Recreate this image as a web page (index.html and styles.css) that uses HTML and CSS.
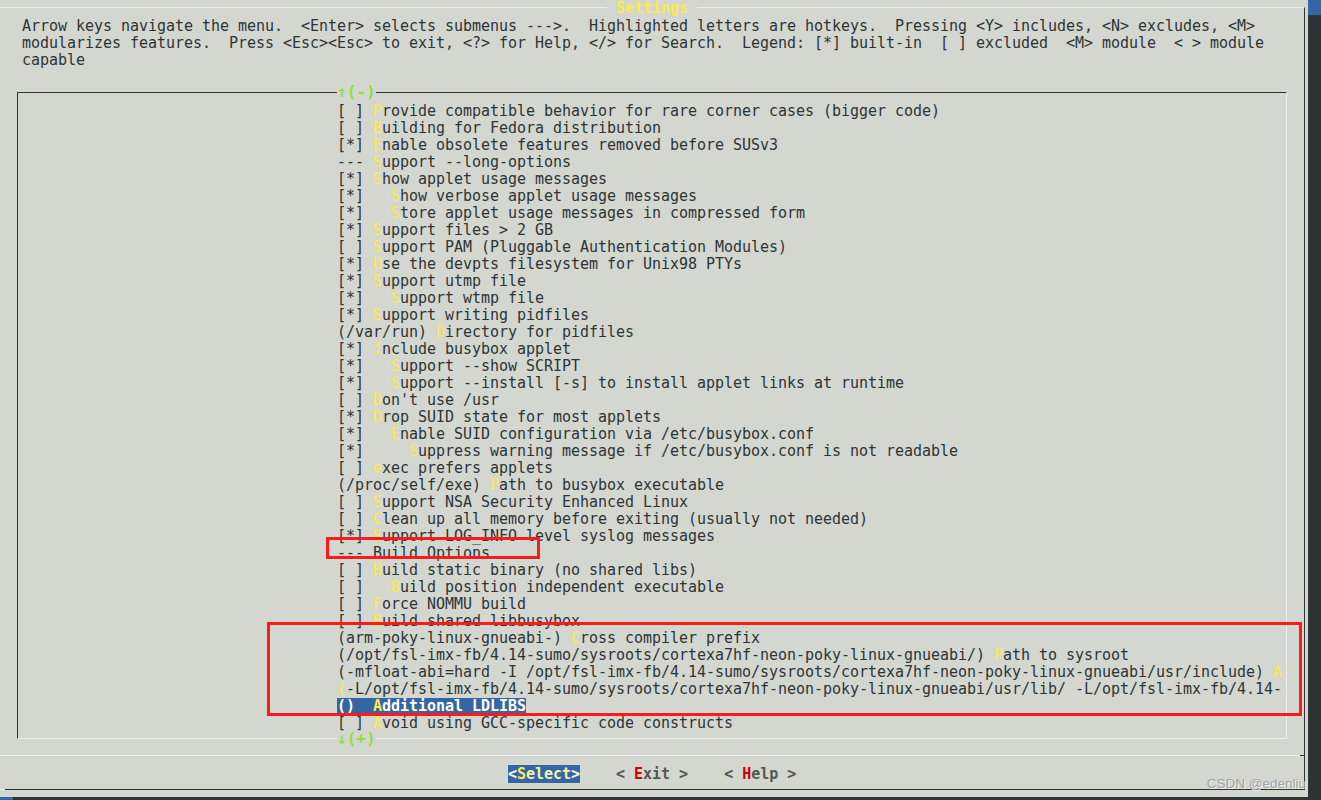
FILE: index.html
```html
<!DOCTYPE html>
<html>
<head>
<meta charset="utf-8">
<link rel="stylesheet" href="styles.css">
</head>
<body>
<div class="screen">
  <div class="term">
    <div class="dialog">
      <div class="title"> Settings </div>
      <div class="help">
        <div class="line">Arrow keys navigate the menu.  &lt;Enter&gt; selects submenus ---&gt;.  Highlighted letters are hotkeys.  Pressing &lt;Y&gt; includes, &lt;N&gt; excludes, &lt;M&gt;</div>
        <div class="line">modularizes features.  Press &lt;Esc&gt;&lt;Esc&gt; to exit, &lt;?&gt; for Help, &lt;/&gt; for Search.  Legend: [*] built-in  [ ] excluded  &lt;M&gt; module  &lt; &gt; module</div>
        <div class="line">capable</div>
      </div>
      <div class="menubox">
        <div class="more up">↑(-)</div>
        <div class="r">[ ] <span class="k">P</span>rovide compatible behavior for rare corner cases (bigger code)</div>
        <div class="r">[ ] <span class="k">B</span>uilding for Fedora distribution</div>
        <div class="r">[*] <span class="k">E</span>nable obsolete features removed before SUSv3</div>
        <div class="r">--- <span class="k">S</span>upport --long-options</div>
        <div class="r">[*] <span class="k">S</span>how applet usage messages</div>
        <div class="r">[*]   <span class="k">S</span>how verbose applet usage messages</div>
        <div class="r">[*]   <span class="k">S</span>tore applet usage messages in compressed form</div>
        <div class="r">[*] <span class="k">S</span>upport files &gt; 2 GB</div>
        <div class="r">[ ] <span class="k">S</span>upport PAM (Pluggable Authentication Modules)</div>
        <div class="r">[*] <span class="k">U</span>se the devpts filesystem for Unix98 PTYs</div>
        <div class="r">[*] <span class="k">S</span>upport utmp file</div>
        <div class="r">[*]   <span class="k">S</span>upport wtmp file</div>
        <div class="r">[*] <span class="k">S</span>upport writing pidfiles</div>
        <div class="r">(/var/run) <span class="k">D</span>irectory for pidfiles</div>
        <div class="r">[*] <span class="k">I</span>nclude busybox applet</div>
        <div class="r">[*]   <span class="k">S</span>upport --show SCRIPT</div>
        <div class="r">[*]   <span class="k">S</span>upport --install [-s] to install applet links at runtime</div>
        <div class="r">[ ] <span class="k">D</span>on't use /usr</div>
        <div class="r">[*] <span class="k">D</span>rop SUID state for most applets</div>
        <div class="r">[*]   <span class="k">E</span>nable SUID configuration via /etc/busybox.conf</div>
        <div class="r">[*]     <span class="k">S</span>uppress warning message if /etc/busybox.conf is not readable</div>
        <div class="r">[ ] <span class="k">e</span>xec prefers applets</div>
        <div class="r">(/proc/self/exe) <span class="k">P</span>ath to busybox executable</div>
        <div class="r">[ ] <span class="k">S</span>upport NSA Security Enhanced Linux</div>
        <div class="r">[ ] <span class="k">C</span>lean up all memory before exiting (usually not needed)</div>
        <div class="r">[*] <span class="k">S</span>upport LOG_INFO level syslog messages</div>
        <div class="r">--- Build Options</div>
        <div class="r">[ ] <span class="k">B</span>uild static binary (no shared libs)</div>
        <div class="r">[ ]   <span class="k">B</span>uild position independent executable</div>
        <div class="r">[ ] <span class="k">F</span>orce NOMMU build</div>
        <div class="r">[ ] <span class="k">B</span>uild shared libbusybox</div>
        <div class="r">(arm-poky-linux-gnueabi-) <span class="k">C</span>ross compiler prefix</div>
        <div class="r">(/opt/fsl-imx-fb/4.14-sumo/sysroots/cortexa7hf-neon-poky-linux-gnueabi/) <span class="k">P</span>ath to sysroot</div>
        <div class="r">(-mfloat-abi=hard -I /opt/fsl-imx-fb/4.14-sumo/sysroots/cortexa7hf-neon-poky-linux-gnueabi/usr/include) <span class="k">A</span></div>
        <div class="r"><span class="k">(</span>-L/opt/fsl-imx-fb/4.14-sumo/sysroots/cortexa7hf-neon-poky-linux-gnueabi/usr/lib/ -L/opt/fsl-imx-fb/4.14-</div>
        <div class="r"><span class="sel">()  <span class="k">A</span>dditional LDLIBS</span></div>
        <div class="r">[ ] <span class="k">A</span>void using GCC-specific code constructs</div>
        <div class="more down">↓(+)</div>
      </div>
      <div class="sep"></div>
      <div class="buttons"><span class="btn active">&lt;<span class="bk">S</span><span class="bl">elect</span>&gt;</span>    <span class="btn">&lt; <span class="hk">E</span>xit &gt;</span>    <span class="btn">&lt; <span class="hk">H</span>elp &gt;</span></div>
    </div>
    <div class="shadow"></div>
  </div>
  <div class="side"></div>
  <div class="mark mark1"></div>
  <div class="mark mark2"></div>
  <div class="watermark">CSDN @edenliu</div>
</div>
</body>
</html>
```

FILE: styles.css
```css
html, body {
  margin: 0;
  padding: 0;
}
body {
  width: 1321px;
  height: 800px;
  overflow: hidden;
  background: #d3d7cf;
  font-family: "DejaVu Sans Mono", monospace;
  font-size: 15px;
  line-height: 17px;
  letter-spacing: -0.03px;
  color: #2e3436;
}
.screen {
  position: relative;
  display: flex;
  width: 1321px;
  height: 800px;
}
.term {
  width: 1308px;
  display: flex;
  flex-direction: column;
  overflow: hidden;
}
.dialog {
  position: relative;
  margin: 7px 0 0 -1px;
  width: 1306px;
  height: 783px;
  box-sizing: border-box;
  border-top: 1px solid #eeeeec;
  border-left: 1px solid #eeeeec;
  border-right: 1px solid #2e3436;
  border-bottom: 1px solid #2e3436;
}
.dialog::after {
  content: "";
  position: absolute;
  left: -1px;
  bottom: -1px;
  width: 6px;
  height: 1px;
  background: #eeeeec;
}
.title {
  position: absolute;
  top: -8px;
  left: 607px;
  white-space: pre;
  background: #d3d7cf;
  color: #fce94f;
  font-weight: bold;
}
.help {
  padding: 10px 0 0 22px;
}
.line {
  white-space: pre;
  height: 17px;
}
.menubox {
  position: relative;
  margin: 23px 0 0 17px;
  width: 1270px;
  height: 647px;
  box-sizing: border-box;
  border-top: 1px solid #2e3436;
  border-left: 1px solid #2e3436;
  border-right: 1px solid #eeeeec;
  border-bottom: 1px solid #eeeeec;
  padding: 10px 0 0 319px;
}
.r {
  white-space: pre;
  height: 17px;
  overflow: hidden;
  width: 946px;
}
.k {
  color: #fce94f;
}
.sel {
  background: #3465a4;
  color: #ffffff;
  font-weight: bold;
}
.sel .k {
  color: #fce94f;
}
.more {
  position: absolute;
  left: 319px;
  color: #8ae234;
  font-weight: bold;
  font-size: 16px;
  line-height: 14px;
  letter-spacing: 0;
  background: #d3d7cf;
  white-space: pre;
}
.more.up {
  top: -8px;
}
.more.down {
  bottom: -8px;
}
.sep {
  margin: 16px -1px 0 -1px;
  height: 1px;
  background: linear-gradient(to right, #eeeeec calc(100% - 5px), #2e3436 0);
}
.buttons {
  margin-top: 10px;
  padding-left: 508px;
  white-space: pre;
  font-weight: bold;
  height: 17px;
}
.btn {
  color: #555753;
}
.btn.active {
  background: #3465a4;
  color: #ffffff;
}
.bk {
  color: #fce94f;
}
.bl {
  color: #f3f0a8;
}
.hk {
  color: #cc0000;
}
.shadow {
  margin-top: 7px;
  height: 3px;
  background: linear-gradient(to right, #3465a4 13px, #2e3436 0);
}
.side {
  width: 13px;
  height: 800px;
  background: linear-gradient(to bottom, #3465a4 15px, #2e3436 0);
}
.mark {
  position: absolute;
  border: 3px solid #ff1a1a;
  box-sizing: border-box;
}
.mark1 {
  left: 326px;
  top: 537px;
  width: 214px;
  height: 22px;
}
.mark2 {
  left: 267px;
  top: 622px;
  width: 1035px;
  height: 94px;
}
.watermark {
  position: absolute;
  right: 15px;
  bottom: 9px;
  font-family: "Liberation Sans", Arial, sans-serif;
  font-size: 13.5px;
  line-height: 15px;
  letter-spacing: 0;
  color: #a0a29e;
  text-shadow: 1px 1px 0 #f2f2f0;
}
```
